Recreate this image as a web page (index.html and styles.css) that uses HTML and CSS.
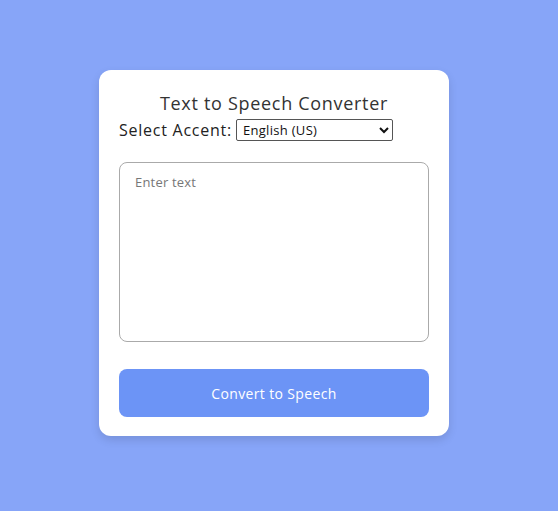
FILE: index.html
```html
<!DOCTYPE html>
<html lang="en">
<head>
<meta charset="UTF-8">
<title>Text to Speech Converter</title>
<link rel="stylesheet" href="styles.css">
</head>
<body>
  <div class="card">
    <h1 class="title">Text to Speech Converter</h1>
    <div class="accent-row">
      <label class="accent-label" for="accent">Select Accent:</label>
      <select id="accent" class="accent-select">
        <option>English (US)</option>
        <option>English (UK)</option>
      </select>
    </div>
    <textarea class="text-input" placeholder="Enter text"></textarea>
    <button class="convert-btn">Convert to Speech</button>
  </div>
</body>
</html>
```
FILE: styles.css
```css
* { box-sizing: border-box; }
html, body { margin: 0; padding: 0; }
body {
  font-family: "Open Sans", "DejaVu Sans", sans-serif;
  background: #87a5f8;
  height: 100vh;
  display: flex;
  justify-content: center;
  align-items: center;
}
.card {
  width: 350px;
  background: #fff;
  border-radius: 12px;
  padding: 20px 20px 19px;
  box-shadow: 0 4px 10px rgba(0, 0, 0, 0.12);
  margin: -5px 10px 0 0;
}
.title {
  margin: 0;
  font-size: 18px;
  font-weight: 400;
  letter-spacing: 0.7px;
  color: #333;
  text-align: center;
  line-height: 26px;
}
.accent-row {
  display: flex;
  align-items: center;
  height: 22px;
  gap: 4px;
  color: #222;
  margin-top: 3px;
}
.accent-label {
  font-size: 16px;
  letter-spacing: 0.75px;
}
.accent-select {
  width: 157px;
  height: 22px;
  font-family: inherit;
  font-size: 13px;
  letter-spacing: 0.3px;
  color: #111;
  border: 1px solid #555;
  border-radius: 2px;
  background: #fff;
  padding: 0 2px;
}
.text-input {
  display: block;
  width: 100%;
  height: 180px;
  margin-top: 21px;
  padding: 10px 15px;
  border: 1px solid #aaa;
  border-radius: 8px;
  font-family: inherit;
  font-size: 13px;
  letter-spacing: 0.2px;
  resize: none;
  color: #333;
}
.text-input::placeholder { color: #777; }
.convert-btn {
  display: block;
  width: 100%;
  height: 48px;
  margin-top: 27px;
  border: none;
  border-radius: 8px;
  background: #6c94f6;
  color: #fff;
  font-family: inherit;
  font-size: 14px;
  letter-spacing: 0.35px;
}
```
